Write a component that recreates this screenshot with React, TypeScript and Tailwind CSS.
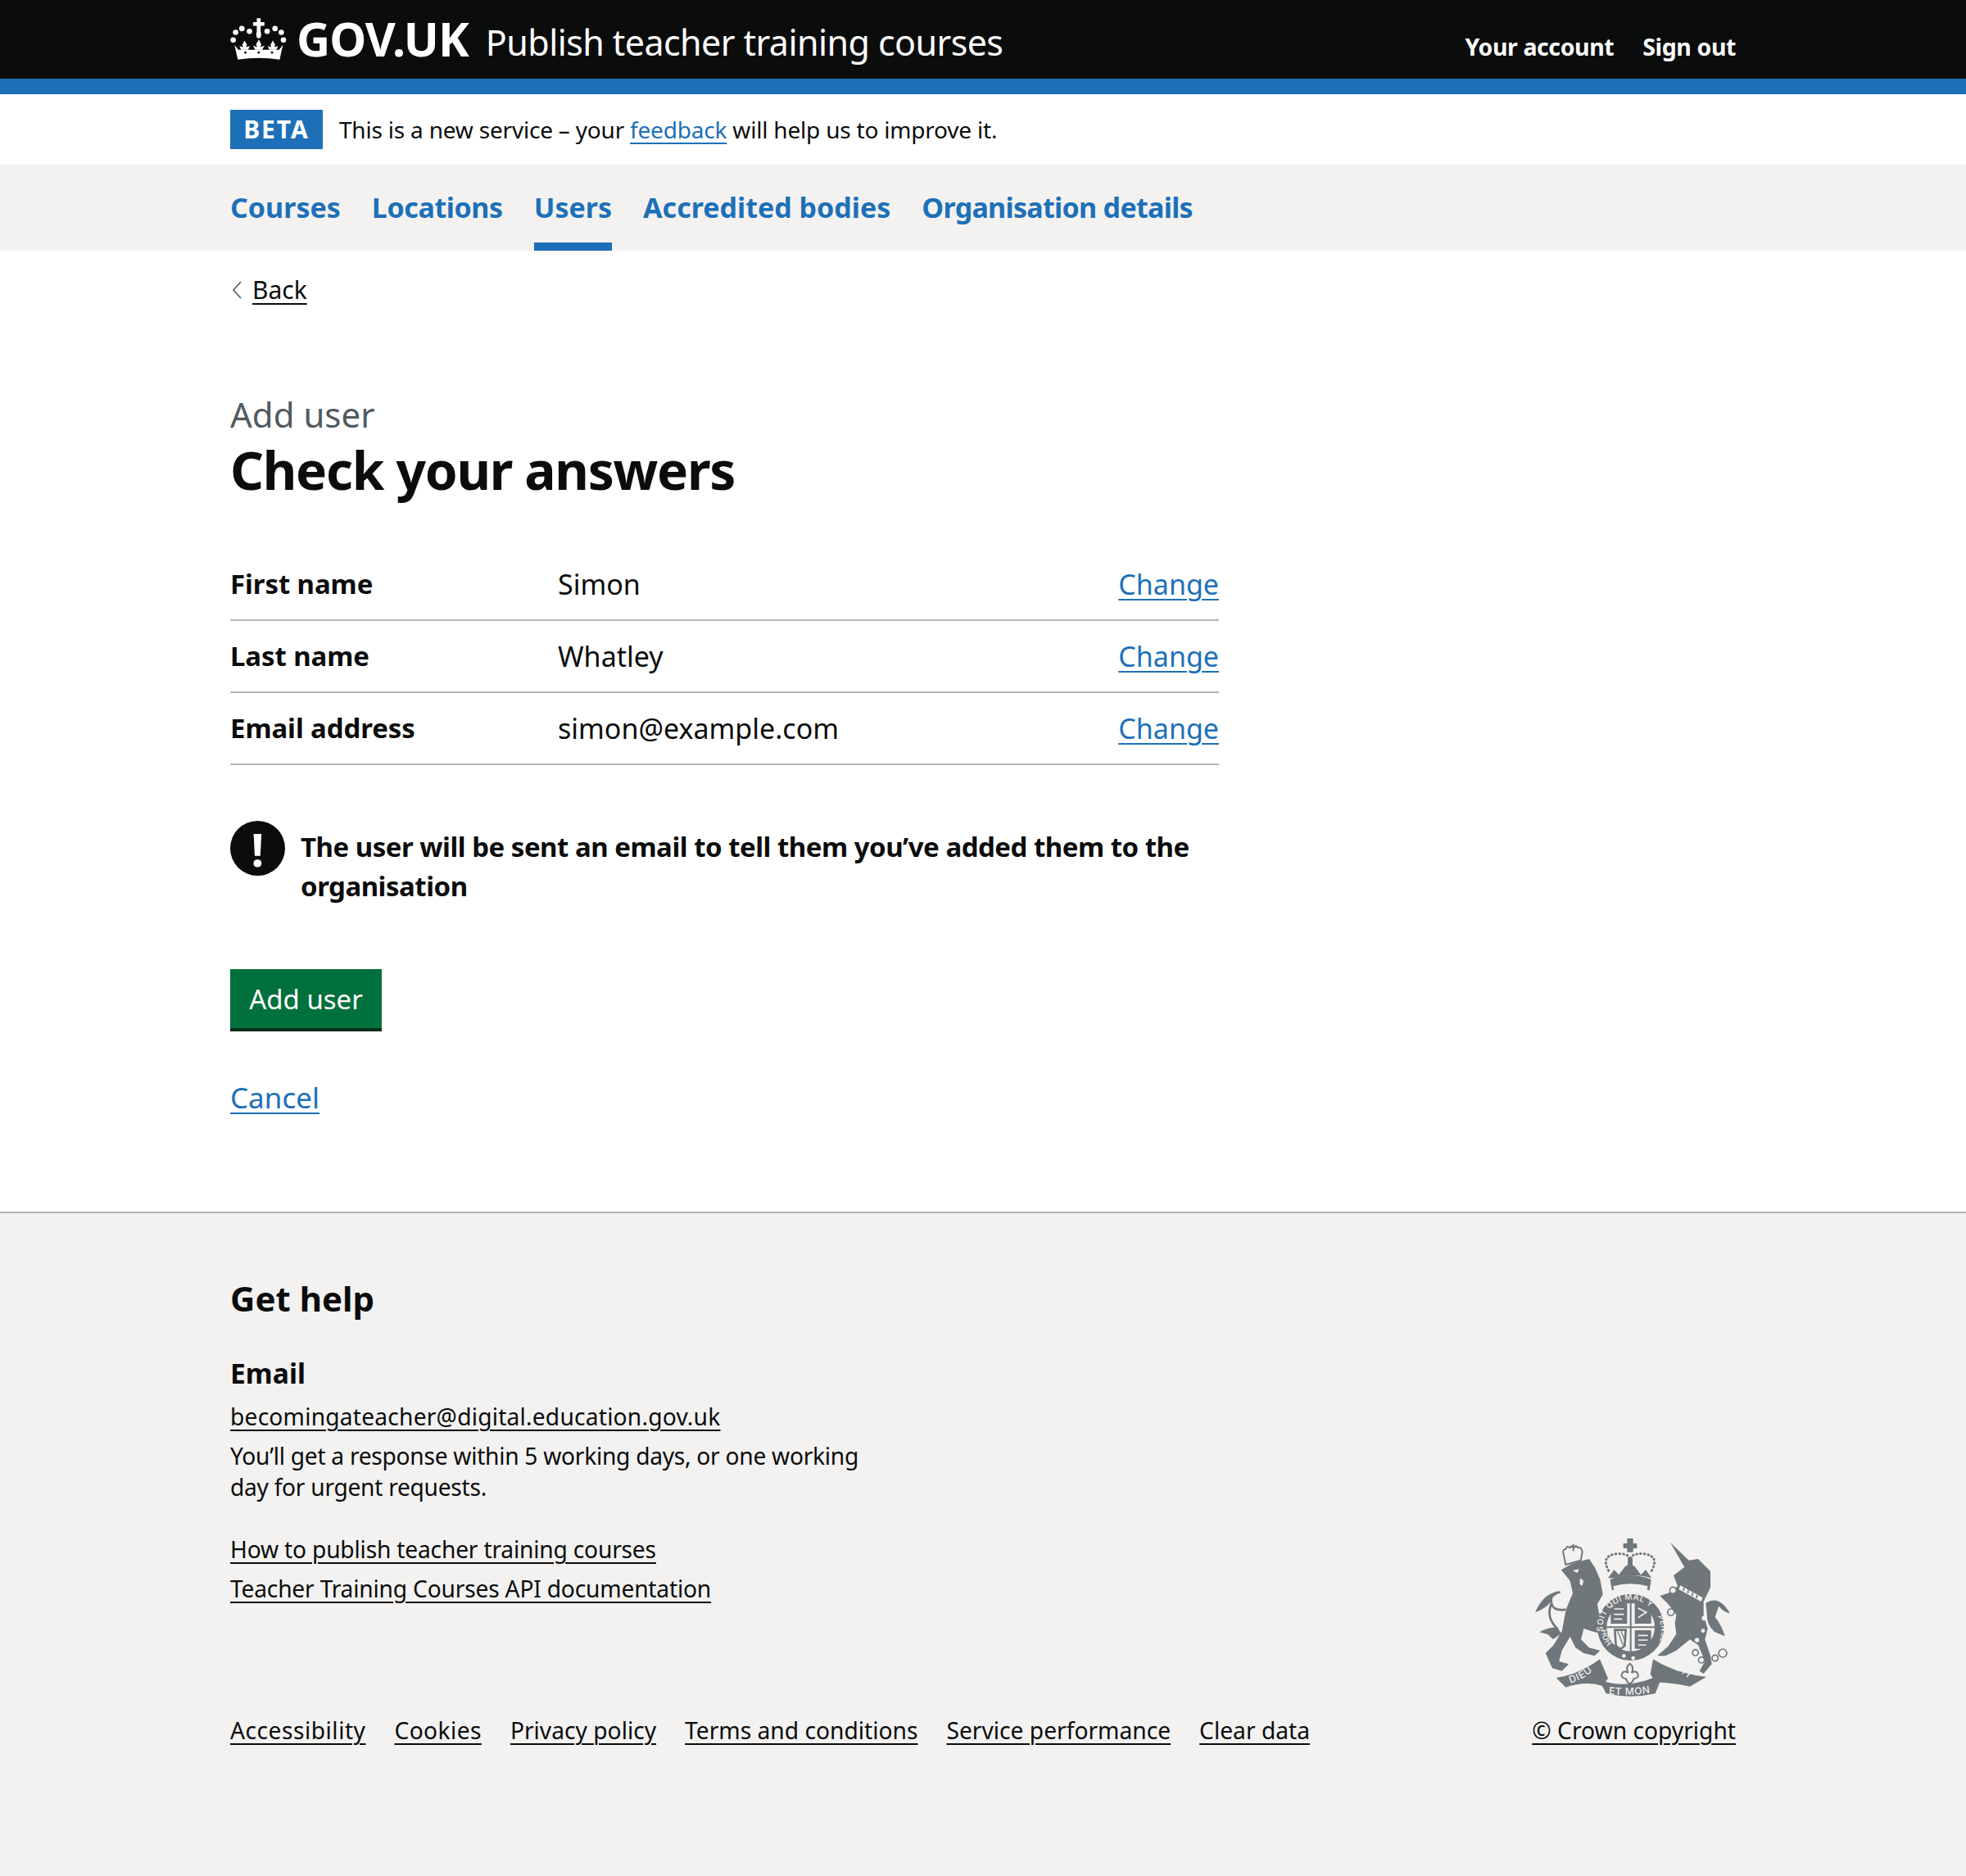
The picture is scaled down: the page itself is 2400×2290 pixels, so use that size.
import React from "react";

const CrownLogo = () => (
  <svg viewBox="62 30 208 152" className="w-[69px] h-[51px] shrink-0" fill="#fff">
    <path d="M160 30h14v14h14v14h-14v22h-14V58h-14V44h14z" />
    <ellipse cx="167" cy="90" rx="9" ry="14" />
    <circle cx="105" cy="68" r="10" />
    <circle cx="133" cy="78" r="10" />
    <circle cx="198" cy="78" r="10" />
    <circle cx="227" cy="68" r="10" />
    <circle cx="250" cy="82" r="10" />
    <circle cx="82" cy="82" r="10" />
    <circle cx="73" cy="110" r="10" />
    <circle cx="258" cy="110" r="10" />
    <path d="M115 112l9 16-4 8 14-4-6 14h-26l-6-14 14 4-4-8zM167 108l10 18-5 10 16-5-8 15h-26l-8-15 16 5-5-10zM219 112l9 16-4 8 14-4-6 14h-26l-6-14 14 4-4-8z" />
    <path d="M78 128l14 18h150l14-18-12 54q-77-12-154 0z" />
    <path d="M112 156l6-5 6 5-6 5zM161 156l6-5 6 5-6 5zM210 156l6-5 6 5-6 5z" fill="#0b0c0c" />
  </svg>
);

const Crest = () => (
  <svg viewBox="100 60 720 585" className="w-[240px] h-[195px] mr-[6px]" fill="#6f777b">
    <defs>
      <path id="garter" d="M352 400a102 102 0 1 1 202 0" />
      <path id="garterLow" d="M345 395a110 110 0 0 0 45 80" />
      <path id="garterRight" d="M552 345a110 110 0 0 1-18 130" />
      <path id="ribLeft" d="M232 590q55-15 100-62" />
      <path id="ribMid" d="M372 630q80 8 162-6" />
      <path id="ribRight" d="M560 518q70 22 120 66" />
    </defs>
    {/* lion */}
    <path d="M198 175l45-25 58-15 20 30 20 45 10 55-20 35 5 30 25 50-10 30-40-10-30-10-10 40 30 30 40 10-20 20-40-10-30-20-20-40-30 50-10 40 35 10-25 25-35-10-25-55 30-30 30-50 15-80 25-60-10-45z" />
    <path d="M215 320q-60 10-52-45 5-18 32-18" fill="none" stroke="#6f777b" strokeWidth="8" />
    <path d="M195 258q-55-8-92 72 32-8 58-38 0-20 34-34z" />
    <path d="M162 300q-20 50 22 90" fill="none" stroke="#6f777b" strokeWidth="8" />
    <path d="M184 385q-35 0-65 18l30 8 20 18 30-20z" />
    <path d="M208 122q-8-22 8-24 4-14 14-4 6-12 14 0 8-12 16 0 14-4 16 16l-6 30-55 16z" fill="none" stroke="#6f777b" strokeWidth="6" />
    <path d="M232 88h8v-8h6v8h8v6h-8v12h-6V94h-8z" />
    <path d="M240 178l24-6-6 14zM268 205l12 10-4 18-10-6z" fill="#f3f2f1" />
    {/* unicorn */}
    <path d="M598 75l68 65 34-5 45 45v60l-25 50v50l15 50-10 40 20 60 5 30-30 35-15-10 20-35-25-60-30-20-50 40-40 20h-30l40-35 30-45-5-40 5-30-30-40-30-30 30-10 35-25-15-40 40-30z" />
    <path d="M728 296q50-30 88 38-25-6-40-26-8 20-14 40 25 30 36 70l-38-16q-30-25-28-68z" />
    <path d="M635 232l82 45-6 14-82-45z" fill="#f3f2f1" />
    <path d="M648 240l-2 12M664 249l-2 12M680 258l-2 12M696 267l-2 12" stroke="#6f777b" strokeWidth="5" />
    <circle cx="722" cy="352" r="9" fill="#f3f2f1" />
    <circle cx="718" cy="398" r="7" fill="#f3f2f1" />
    <circle cx="696" cy="432" r="8" fill="#f3f2f1" />
    <g fill="#f3f2f1" stroke="#6f777b" strokeWidth="5">
      <circle cx="690" cy="478" r="11" />
      <circle cx="712" cy="505" r="11" />
      <circle cx="762" cy="498" r="11" />
      <circle cx="790" cy="480" r="15" />
      <circle cx="608" cy="250" r="12" />
      <circle cx="600" cy="330" r="12" />
    </g>
    {/* shield and garter */}
    <circle cx="453" cy="385" r="122" />
    <circle cx="453" cy="385" r="88" fill="#f3f2f1" />
    <path d="M365 385h176M453 280v195" stroke="#6f777b" strokeWidth="6" />
    <path d="M380 298h60v74h-60zM468 292h60v80h-60zM468 396h60v68h-60z" />
    <path d="M392 318h36M392 338h36M392 355h30M480 315l30 15-30 20M480 415h36M480 432h36M480 450h30" stroke="#f3f2f1" strokeWidth="5" fill="none" />
    <path d="M395 395h40l-4 58-16 12-16-12z" fill="none" stroke="#6f777b" strokeWidth="8" />
    <path d="M405 400l20 50M418 400l12 30" stroke="#6f777b" strokeWidth="4" />
    <text fontFamily="Inter, sans-serif" fontSize="30" fontWeight="500" fill="#f3f2f1" letterSpacing="1.5">
      <textPath href="#garter">SOIT QUI MAL Y</textPath>
    </text>
    <text fontFamily="Inter, sans-serif" fontSize="28" fontWeight="500" fill="#f3f2f1" letterSpacing="1">
      <textPath href="#garterRight">PENSE</textPath>
    </text>
    <text fontFamily="Inter, sans-serif" fontSize="28" fontWeight="500" fill="#f3f2f1" letterSpacing="1">
      <textPath href="#garterLow">HOH</textPath>
    </text>
    <circle cx="428" cy="490" r="7" fill="#f3f2f1" />
    <circle cx="462" cy="498" r="7" fill="#f3f2f1" />
    {/* imperial crown */}
    <path d="M378 210q75-30 150 0l-6 40q-68-22-138 0z" />
    <path d="M388 235q65-18 128 0l-4 14q-60-14-120 0z" fill="#f3f2f1" />
    <path d="M370 205l22-30 18 18 22-30 18-10 18 10 22 30 18-18 22 30q-70-20-140 0z" />
    <path d="M440 60h22v18h14v18h-14v14h-22V96h-14V78h14z" />
    <path d="M442 130h18v40h-18z" />
    <g fill="none" stroke="#6f777b" strokeWidth="9" strokeDasharray="2 12" strokeLinecap="round">
      <path d="M372 178q-30-55 30-62 40-2 48 16" />
      <path d="M530 178q30-55-30-62-40-2-48 16" />
    </g>
    {/* motto */}
    <path d="M180 570q80-10 160-68l30 70-20 28q-60-20-135 5z" />
    <path d="M535 502q80 50 195 65l-60 35q-60-15-125-15l-20-30z" />
    <path d="M338 578q115 40 235-25l-30 75q-90 20-180 0z" />
    <text fontFamily="Inter, sans-serif" fontSize="36" fontWeight="500" fill="#f3f2f1" letterSpacing="3">
      <textPath href="#ribLeft">DIEU</textPath>
    </text>
    <text fontFamily="Inter, sans-serif" fontSize="36" fontWeight="500" fill="#f3f2f1" letterSpacing="2">
      <textPath href="#ribMid">ET MON</textPath>
    </text>
    <text fontFamily="Inter, sans-serif" fontSize="36" fontWeight="500" fill="#f3f2f1" letterSpacing="3">
      <textPath href="#ribRight">DROIT</textPath>
    </text>
    <path d="M450 518q18 14 6 34 18-12 24 6 2 14-16 16-4 14-14 18-10-4-14-18-18-2-16-16 6-18 24-6-12-20 6-34z" fill="#f3f2f1" stroke="#6f777b" strokeWidth="6" />
  </svg>
);

const rows = [
  { label: "First name", value: "Simon" },
  { label: "Last name", value: "Whatley" },
  { label: "Email address", value: "simon@example.com" },
];

const footerLinks = [
  { label: "Accessibility", className: "tracking-[0.5px]" },
  { label: "Cookies", className: "tracking-[0.4px]" },
  { label: "Privacy policy", className: "" },
  { label: "Terms and conditions", className: "" },
  { label: "Service performance", className: "" },
  { label: "Clear data", className: "" },
];

const navItems = [
  { label: "Courses", className: "" },
  { label: "Locations", className: "tracking-[-0.4px]" },
  { label: "Users", className: "border-b-[10px] border-[#1d70b8]" },
  { label: "Accredited bodies", className: "" },
  { label: "Organisation details", className: "tracking-[-0.7px]" },
];

const linkClass = "underline decoration-[2px] underline-offset-[5px]";

export default function App() {
  return (
    <div className="min-h-[2290px] flex flex-col bg-white text-[#0b0c0c] font-['Noto_Sans',sans-serif] text-[34px] leading-[48px]">
      <header className="bg-[#0b0c0c] border-b-[19px] border-[#1d70b8] h-[115px] px-[281px] flex items-start justify-between text-white">
        <div className="flex items-center gap-[12px] pt-[14px]">
          <CrownLogo />
          <span className="font-bold text-[57px] leading-[57px] tracking-[-1px]">GOV.UK</span>
          <span className="text-[43px] leading-[57px] ml-[9px] pt-[9px] tracking-[-0.57px]">Publish teacher training courses</span>
        </div>
        <div className="flex gap-[35px] pt-[35px] font-bold text-[28.5px] leading-[44px] tracking-[-0.4px]">
          <span>Your account</span>
          <span>Sign out</span>
        </div>
      </header>

      <div className="h-[86px] px-[281px] flex items-center gap-[20px] text-[28px]">
        <span className="bg-[#1d70b8] text-white font-bold w-[113px] h-[48px] flex items-center justify-center text-[30px] tracking-[2px]">BETA</span>
        <p className="tracking-[-0.2px]">
          This is a new service – your <a className={`text-[#1d70b8] ${linkClass}`}>feedback</a> will help us to improve it.
        </p>
      </div>

      <nav className="h-[105px] bg-[#f3f2f1] px-[281px] flex gap-[38px] font-bold text-[34px] text-[#1d70b8]">
        {navItems.map((item) => (
          <span key={item.label} className={`pt-[28px] ${item.className}`}>
            {item.label}
          </span>
        ))}
      </nav>

      <main className="px-[281px] pb-[115px]">
        <div className="mt-[26px] flex items-center gap-[11px] text-[30px] leading-[44px]">
          <svg viewBox="0 0 12 22" className="w-[12px] h-[22px] ml-[2px] mr-[2px]" fill="none" stroke="#505a5f" strokeWidth="1.6">
            <path d="M11 1L2 11l9 10" />
          </svg>
          <a className={linkClass}>Back</a>
        </div>

        <p className="mt-[102px] text-[42px] leading-[56px] text-[#505a5f]">Add user</p>
        <h1 className="font-bold text-[64px] leading-[80px] tracking-[-1.3px]">Check your answers</h1>

        <dl className="mt-[56px] w-[1207px]">
          {rows.map((row) => (
            <div key={row.label} className="h-[88px] flex items-center border-b-2 border-[#b1b4b6]">
              <dt className="w-[400px] font-bold text-[33px] tracking-[-0.1px]">{row.label}</dt>
              <dd className="flex-1">{row.value}</dd>
              <a className={`text-[#1d70b8] ${linkClass}`}>Change</a>
            </div>
          ))}
        </dl>

        <div className="mt-[68px] w-[1207px] flex gap-[19px]">
          <div className="w-[67px] h-[67px] rounded-full bg-[#0b0c0c] text-white font-bold text-[56px] flex items-center justify-center shrink-0">
            !
          </div>
          <p className="font-bold text-[33px] tracking-[-0.5px] mt-[8px]">The user will be sent an email to tell them you’ve added them to the organisation</p>
        </div>

        <button className="mt-[77px] block w-[185px] h-[76px] pt-[2px] bg-[#00703c] border-b-[4px] border-[#002d18] text-white text-[33px]">Add user</button>

        <a className={`inline-block mt-[57px] text-[35px] text-[#1d70b8] ${linkClass}`}>Cancel</a>
      </main>

      <footer className="flex-1 border-t-2 border-[#b1b4b6] bg-[#f3f2f1] px-[281px] text-[28.2px] leading-[38px]">
        <h2 className="mt-[74px] font-bold text-[42px] leading-[60px]">Get help</h2>
        <h3 className="mt-[38px] font-bold text-[33.7px] leading-[46px]">Email</h3>
        <a className={`inline-block mt-[11px] tracking-[0.2px] ${linkClass}`}>becomingateacher@digital.education.gov.uk</a>
        <p className="mt-[10px] w-[800px] tracking-[-0.29px]">You’ll get a response within 5 working days, or one working day for urgent requests.</p>
        <div className="flex justify-between items-end mt-[38px]">
          <div>
            <div className="flex flex-col gap-[10px] tracking-[-0.2px]">
              <a className={linkClass}>How to publish teacher training courses</a>
              <a className={linkClass}>Teacher Training Courses API documentation</a>
            </div>
            <div className="flex gap-[35px] mt-[135px]">
              {footerLinks.map((link) => (
                <a key={link.label} className={`${linkClass} ${link.className}`}>
                  {link.label}
                </a>
              ))}
            </div>
          </div>
          <div className="flex flex-col items-end">
            <Crest />
            <a className={`mt-[20px] ${linkClass}`}>© Crown copyright</a>
          </div>
        </div>
      </footer>
    </div>
  );
}
